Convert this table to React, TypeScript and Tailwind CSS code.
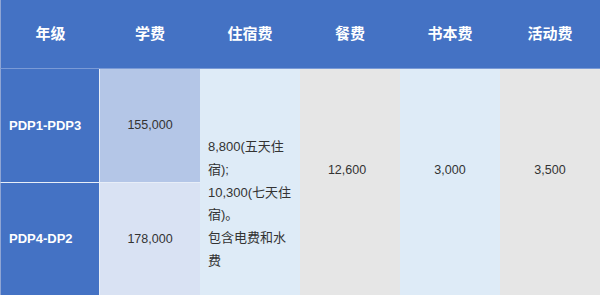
import React from "react";

const font = { fontFamily: "'Liberation Sans', 'Noto Sans CJK SC', sans-serif" };

export default function App() {
  const headers = ["年级", "学费", "住宿费", "餐费", "书本费", "活动费"];
  return (
    <div className="w-[600px] h-[295px] overflow-hidden bg-white" style={font}>
      <div className="grid grid-cols-[100px_100px_100px_100px_100px_100px] grid-rows-[69px_114px_112px]">
        {headers.map((h, i) => (
          <div
            key={h}
            className={`flex items-center justify-center bg-[#4472c4] border-b border-[#7a9ad6] text-white font-bold text-[15px] ${i === 0 ? "border-l border-l-[#8fa5d4]" : ""}`}
          >
            {h}
          </div>
        ))}

        {/* Row 1 */}
        <div className="flex items-center pl-[8px] bg-[#4472c4] border-l border-l-[#8fa5d4] border-r border-r-[#e8eef8] border-b border-b-[#e8eef8] text-white font-bold text-[13px]">
          PDP1-PDP3
        </div>
        <div className="flex items-center justify-center bg-[#b4c6e7] border-b border-b-[#e8eef8] text-[#333] text-[12.5px]">
          155,000
        </div>
        <div className="row-span-2 bg-[#deebf7] pl-[8px] pr-[6px] pt-[67px] text-[#333] text-[13px] leading-[22.8px]">
          8,800(五天住宿);
          <br />
          10,300(七天住宿)。
          <br />
          包含电费和水费
        </div>
        <div className="row-span-2 bg-[#e6e6e6] pt-[90px] text-center text-[#333] text-[12.5px] leading-[22px] pr-[6px]">
          12,600
        </div>
        <div className="row-span-2 bg-[#deebf7] pt-[90px] text-center text-[#333] text-[12.5px] leading-[22px]">
          3,000
        </div>
        <div className="row-span-2 bg-[#e6e6e6] pt-[90px] text-center text-[#333] text-[12.5px] leading-[22px]">
          3,500
        </div>

        {/* Row 2 */}
        <div className="flex items-center pl-[8px] bg-[#4472c4] border-l border-l-[#8fa5d4] border-r border-r-[#e8eef8] text-white font-bold text-[13px]">
          PDP4-DP2
        </div>
        <div className="flex items-center justify-center bg-[#d9e2f3] text-[#333] text-[12.5px]">
          178,000
        </div>
      </div>
    </div>
  );
}
